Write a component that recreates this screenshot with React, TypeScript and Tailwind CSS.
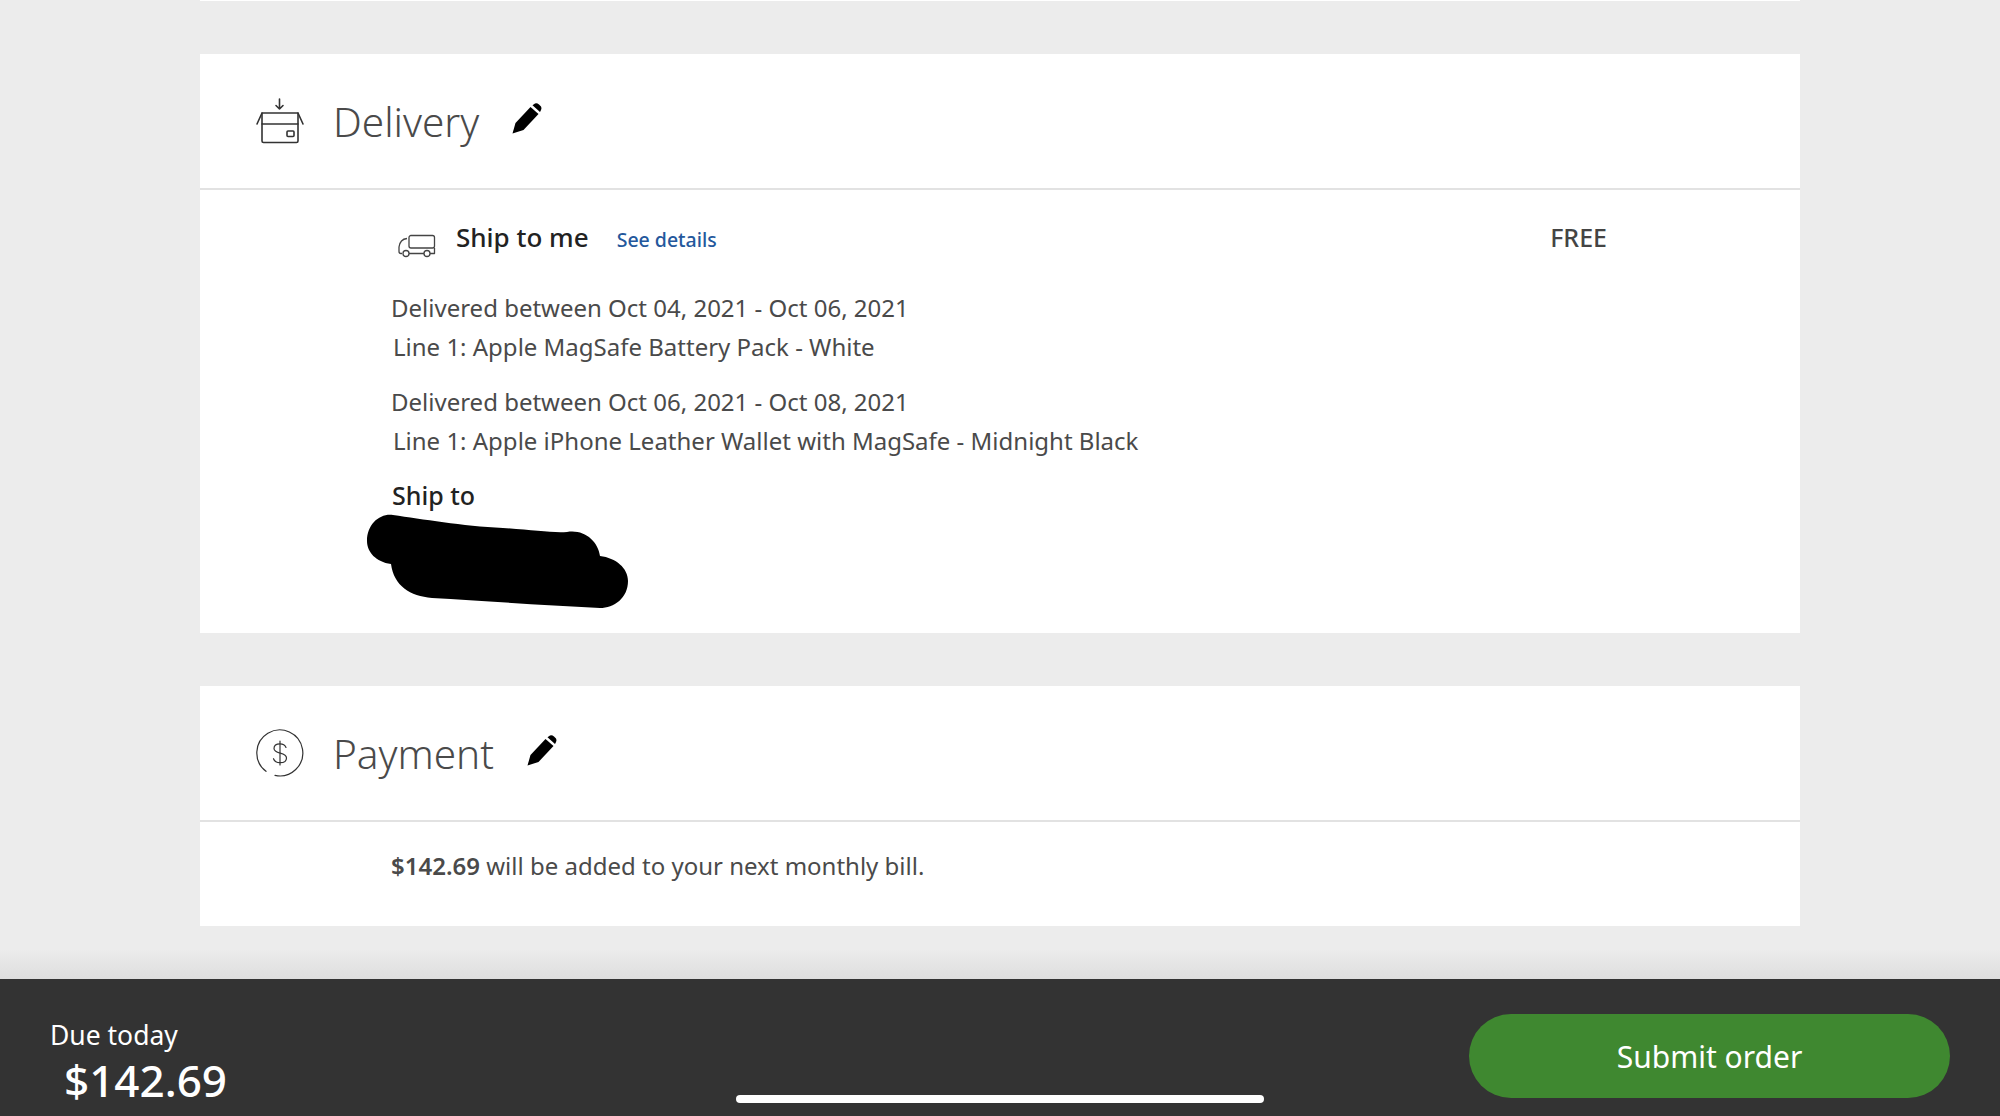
function PencilIcon() {
  return (
    <svg viewBox="0 0 30 32" className="w-[30px] h-[32px] text-black" fill="currentColor">
      <path d="M0.500 30.500 L3.500 20 L18.500 4 L26.500 11 L11.500 27 Z" />
      <path d="M20.500 2.200 L23 0.500 Q25 -0.200 27 1.500 L29 3.500 Q30 5.500 28.800 7.500 L28 9 Z" />
    </svg>
  );
}

function BoxIcon() {
  return (
    <svg viewBox="0 0 48 48" className="w-12 h-12 text-[#333]" fill="none" stroke="currentColor" strokeWidth="1.6" strokeLinejoin="round" strokeLinecap="round">
      <path d="M23.500 2v10M20 8.500l3.500 3.500L27 8.500" />
      <path d="M1 27l5-11h36l5 11" />
      <path d="M6 16v11h36V16" />
      <path d="M6 27v17a1.500 1.500 0 0 0 1.500 1.500h33a1.500 1.500 0 0 0 1.500-1.500V27" />
      <rect x="31" y="34" width="7" height="5.500" rx="1" />
    </svg>
  );
}

function TruckIcon() {
  return (
    <svg viewBox="0 0 38 24" className="w-[38px] h-6 text-[#444]" fill="none" stroke="currentColor" strokeWidth="1.3" strokeLinejoin="round">
      <rect x="11" y="1.500" width="25.500" height="12.500" rx="2" />
      <path d="M9 4.500 C4 5 1.500 9 1 13v4.500q0 2 2 2h1" />
      <circle cx="8" cy="19.500" r="3" />
      <circle cx="29" cy="19.500" r="3" />
      <path d="M11 19.500h15M32 19.500h4.500V14" />
    </svg>
  );
}

function DollarIcon() {
  return (
    <svg viewBox="0 0 48 48" className="w-12 h-12 text-[#333]" fill="none" stroke="currentColor" strokeWidth="1.2" strokeLinecap="round">
      <path d="M10 42.300A23 23 0 1 1 19 46.400" />
      <path d="M24 12v24" />
      <path d="M30 18.500c-1-2.500-3.200-3.700-6-3.700-3.500 0-6 1.800-6 4.600 0 6 12.500 3.300 12.500 9.500 0 3-2.700 4.800-6.500 4.800-3.200 0-5.500-1.400-6.500-4" />
    </svg>
  );
}

function SectionHeader({ icon, title, gap }: { icon: React.ReactNode; title: string; gap: string }) {
  return (
    <div className="h-[136px] border-b-2 border-[#e2e2e2] flex items-center pl-14">
      {icon}
      <h2 className="ml-[29px] mt-[2px] text-[40.500px] font-light text-[#4a4a4a] leading-none">{title}</h2>
      <div className={`${gap} -mt-[5px]`}>
        <PencilIcon />
      </div>
    </div>
  );
}

export default function App() {
  return (
    <div className="w-[2000px] h-[1116px] overflow-hidden flex flex-col bg-[#ececec] font-['Noto_Sans',sans-serif]">
      <main className="flex-1 px-[200px] relative">
        <div className="h-px bg-white" />
        <section className="mt-[53px] bg-white h-[579px]">
          <SectionHeader icon={<BoxIcon />} title="Delivery" gap="ml-[33px]" />
          <div className="pl-[192px] pr-[193px] text-[24px] text-[#4a4a4a]">
            <div className="flex items-center pt-[29px] h-[66px]">
              <div className="ml-[6px] mt-4"><TruckIcon /></div>
              <span className="ml-[20px] text-[26px] font-medium text-[#222]">Ship to me</span>
              <a className="ml-7 mt-[5px] text-[19.500px] font-medium text-[#24589c]">See details</a>
              <span className="ml-auto text-[25px] font-medium text-[#444]">FREE</span>
            </div>
            <p className="mt-[33px] -ml-px leading-[38px]">Delivered between Oct 04, 2021 - Oct 06, 2021</p>
            <p className="ml-px leading-[39px]">Line 1: Apple MagSafe Battery Pack - White</p>
            <p className="mt-[17px] -ml-px leading-[38px]">Delivered between Oct 06, 2021 - Oct 08, 2021</p>
            <p className="ml-px leading-[39px]">Line 1: Apple iPhone Leather Wallet with MagSafe - Midnight Black</p>
            <p className="mt-4 leading-[38px] text-[25px] font-medium text-[#222]">Ship to</p>
            <svg viewBox="0 0 270 96" className="w-[270px] h-24 -ml-[30px]" fill="#000">
              <path d="M31 1 C60 5 100 12 141 14 C170 16 190 19 205 18 C222 15 236 27 238 42 C254 44 266 54 266 67 C266 84 252 94 238 94 C180 91 120 87 70 84 C48 82 32 72 29 50 C14 48 5 38 5 27 C5 10 18 -1 31 1 Z" />
            </svg>
          </div>
        </section>
        <section className="mt-[53px] bg-white h-[240px]">
          <SectionHeader icon={<DollarIcon />} title="Payment" gap="ml-[33px]" />
          <p className="pl-[191px] pt-[25px] text-[24px] leading-[38px] text-[#4a4a4a]">
            <span className="font-semibold">$142.69</span> will be added to your next monthly bill.
          </p>
        </section>
        <div className="absolute left-0 right-0 bottom-0 h-[30px] bg-gradient-to-b from-transparent to-[#dedede] -mx-[200px]" />
      </main>
      <footer className="h-[137px] bg-[#333333] flex items-start justify-between px-[50px] relative">
        <div className="text-white">
          <div className="mt-[38px] text-[26.500px] leading-9">Due today</div>
          <div className="ml-[14px] -mt-px text-[44px] font-medium leading-[56px]">$142.69</div>
        </div>
        <button className="mt-[35px] w-[481px] h-[84px] rounded-full bg-[#3f8830] text-white text-[30px]">
          Submit order
        </button>
        <div className="absolute left-[736px] bottom-[13px] w-[528px] h-2 rounded-full bg-white" />
      </footer>
    </div>
  );
}
